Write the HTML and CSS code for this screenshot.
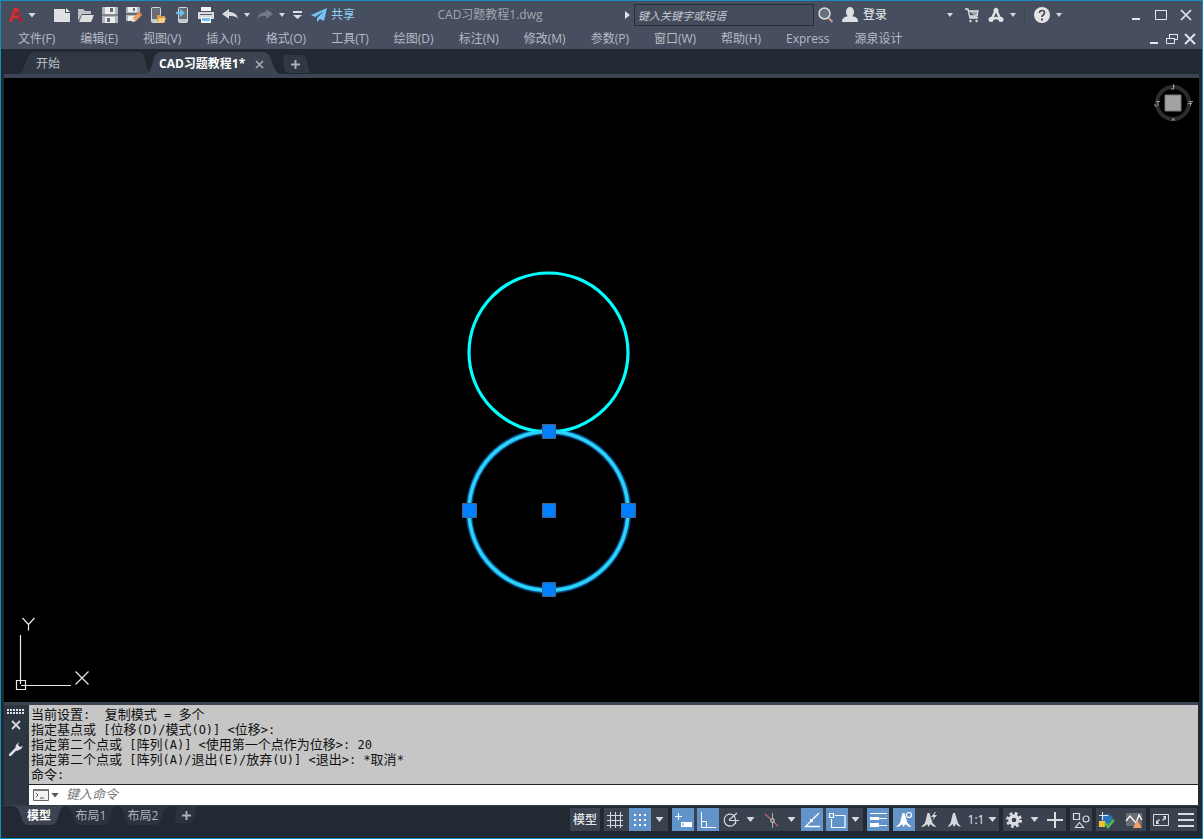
FILE: index.html
```html
<!DOCTYPE html>
<html lang="zh-CN">
<head>
<meta charset="utf-8">
<meta name="viewport" content="width=device-width, initial-scale=1">
<title>CAD习题教程1.dwg</title>
<link rel="stylesheet" href="styles.css">
</head>
<body>
<div class="window">
  <header class="titlebar">
    <div class="quick">
      <button class="app" aria-label="应用程序菜单"><svg width="16" height="20" viewBox="0 0 16 20"><path d="M1 17 6 3h4l5 14h-4l-1-4H6l-2 4z" fill="#a9272f"/><path d="M6 3h4l1 3-3 1-1 3h3l1 3H6l-2 4H1z" fill="#cf2f36"/><path d="m8 7 1.500 4h-3z" fill="#464e5f"/></svg><i class="caret big"></i></button>
      <button class="tool" aria-label="新建"><svg width="16" height="16" viewBox="0 0 16 16"><path d="M0 2h11v4h5v9H0z" fill="#dfe0e2"/><path d="m12 1 4 4h-4z" fill="#eee"/></svg></button>
      <button class="tool" aria-label="打开"><svg width="16" height="16" viewBox="0 0 16 16"><path d="M0 14V2h5l2 2h6v3H4z" fill="#bfc1c4"/><path d="M4 8h12l-3 7H1z" fill="#dedfdf"/></svg></button>
      <button class="tool" aria-label="保存"><svg width="16" height="16" viewBox="0 0 16 16"><path d="M0 0h16v16H0z" fill="#b3b6ba"/><path d="M3 0h10v7H3zM3 10h10v6H3z" fill="#ecedee"/><path d="M0 7h16v2H0z" fill="#83878d"/><path d="M8 1h3v4H8zM5 11h3v4H5z" fill="#656b75"/></svg></button>
      <button class="tool" aria-label="另存为"><svg width="16" height="16" viewBox="0 0 16 16"><path d="M0 0h14v8l-7 6H0z" fill="#b3b6ba"/><path d="M2 0h9v5H2zM2 9h6v5H2z" fill="#ecedee"/><path d="M0 6h14v2H0zM7 1h2v3H7z" fill="#656b75"/><path d="m6 15 1-4 6-6 3 3-6 6z" fill="#e7a15e"/><path d="m6 15 1-4 3 3z" fill="#f5e0c0"/><path d="m12 6 2-1 2 2-1 2z" fill="#d9744b"/></svg></button>
      <button class="tool" aria-label="从移动设备打开"><svg width="16" height="16" viewBox="0 0 16 16"><rect x="1.500" y=".5" width="9" height="15" rx="1" fill="#686d75" stroke="#d5d7d9"/><path d="M2 12h8v3H2z" fill="#c6c8cb"/><path d="M7 15V8h3l1 1h4v6z" fill="#d69a48"/><path d="M9 11h7l-2 5H7z" fill="#f4cf83"/></svg></button>
      <button class="tool" aria-label="保存到移动设备"><svg width="16" height="16" viewBox="0 0 16 16"><rect x="4.500" y=".5" width="9" height="15" rx="1" fill="#686d75" stroke="#d5d7d9"/><path d="M5 12h8v3H5z" fill="#c6c8cb"/><path d="M2 5h4V2l5 4-5 4V7H2z" fill="#63c1f2"/></svg></button>
      <button class="tool" aria-label="打印"><svg width="16" height="16" viewBox="0 0 16 16"><path d="M3 0h10v4H3z" fill="#f5f5f5"/><path d="M0 5h16v7H0z" fill="#d9dadb"/><path d="M2 7h12v1H2z" fill="#5b6370"/><path d="M3 10h10v6H3z" fill="#f8f8f8"/><path d="M4 11h8v3H4z" fill="#72bdec"/></svg></button>
      <button class="tool" aria-label="放弃"><svg width="16" height="14" viewBox="0 0 16 14"><path d="m0 6 7-5v3c5 0 8 2 9 7-2-3-5-3-9-3v3z" fill="#d9dade"/></svg></button>
      <i class="caret"></i>
      <button class="tool" aria-label="重做"><svg width="16" height="14" viewBox="0 0 16 14"><path d="M16 6 9 1v3c-5 0-8 2-9 7 2-3 5-3 9-3v3z" fill="#70798a"/></svg></button>
      <i class="caret"></i>
      <button class="custom" aria-label="自定义"><svg width="9" height="9" viewBox="0 0 9 9"><path d="M0 0h9v2H0zM0 4h9L4.500 8z" fill="#dddee2"/></svg></button>
      <button class="share"><svg width="16" height="16" viewBox="0 0 16 16"><path d="M16 1 0 8l4 2 9-6-7 7v4l3-3 4 2z" fill="#77c5f5"/></svg><span>共享</span></button>
    </div>
    <h1 class="doc">CAD习题教程1.dwg</h1>
    <div class="account">
      <button class="arrow" aria-label="展开搜索"><svg width="5" height="8" viewBox="0 0 5 8"><path d="m0 0 5 4-5 4z" fill="#dfe1e5"/></svg></button>
      <input class="search" type="text" placeholder="键入关键字或短语" aria-label="搜索">
      <button class="find" aria-label="查找"><svg width="16" height="16" viewBox="0 0 16 16"><circle cx="6.500" cy="6.500" r="5.500" fill="#69717e" stroke="#dcdde0" stroke-width="1.500"/><path d="m10.500 11 4 4" stroke="#c6a185" stroke-width="2"/></svg></button>
      <button class="login"><svg width="16" height="16" viewBox="0 0 16 16"><ellipse cx="8" cy="5" rx="4" ry="5" fill="#dedfe2"/><path d="M0 15c0-4 2-5 6-6h4c4 1 6 2 6 6z" fill="#dedfe2"/></svg><span>登录</span></button>
      <i class="caret far"></i>
      <button class="tool" aria-label="应用商店"><svg width="16" height="16" viewBox="0 0 16 16"><path d="M1 2h3l2 9h8M4 4h10l-1 5H5" fill="#9fa4ad" stroke="#dcdde0" stroke-width="1.300"/><circle cx="6.500" cy="14" r="1.200" fill="#ddd"/><circle cx="12.500" cy="14" r="1.200" fill="#ddd"/></svg></button>
      <button class="tool" aria-label="Autodesk App"><svg width="16" height="16" viewBox="0 0 16 16"><path d="m8 3-5 10q5-4 10 0z" fill="none" stroke="#e0e1e4" stroke-width="2.500"/><circle cx="8" cy="3.500" r="2.500" fill="#e0e1e4"/><circle cx="3" cy="12.500" r="2.500" fill="#e0e1e4"/><circle cx="13" cy="12.500" r="2.500" fill="#e0e1e4"/></svg></button>
      <i class="caret"></i>
      <span class="rule"></span>
      <button class="tool" aria-label="帮助"><svg width="16" height="16" viewBox="0 0 16 16"><circle cx="8" cy="8" r="8" fill="#e4e4e4"/><path d="M5.500 6c0-3.500 5-3 5-.3C10.500 8 8 7.500 8 10" fill="none" stroke="#3f4756" stroke-width="1.600"/><path d="M7 11.500h2v2H7z" fill="#3f4756"/></svg></button>
      <i class="caret"></i>
    </div>
    <div class="winbuttons">
      <button aria-label="最小化"><svg width="12" height="12" viewBox="0 0 12 12"><path d="M2 9h8v2H2z" fill="#e4e6ea"/></svg></button>
      <button aria-label="最大化"><svg width="12" height="12" viewBox="0 0 12 12"><path d="M.5 1.500h11v9H.5z" fill="none" stroke="#e4e6ea"/><path d="M0 1h12v1H0z" fill="#e4e6ea"/></svg></button>
      <button aria-label="关闭"><svg width="12" height="12" viewBox="0 0 12 12"><path d="m1 1 10 10M11 1 1 11" stroke="#e4e6ea" stroke-width="1.700"/></svg></button>
    </div>
  </header>

  <nav class="menubar">
    <button>文件(F)</button><button>编辑(E)</button><button>视图(V)</button><button>插入(I)</button><button>格式(O)</button><button>工具(T)</button><button>绘图(D)</button><button>标注(N)</button><button>修改(M)</button><button>参数(P)</button><button>窗口(W)</button><button>帮助(H)</button><button>Express</button><button>源泉设计</button>
    <div class="docbuttons">
      <button aria-label="最小化文档"><svg width="12" height="12" viewBox="0 0 12 12"><path d="M2 9h8v2H2z" fill="#e4e6ea"/></svg></button>
      <button aria-label="还原文档"><svg width="12" height="12" viewBox="0 0 12 12"><path d="M3.500 5V1.500h8v5H8" fill="none" stroke="#e4e6ea"/><path d="M3 1h9v1H3zM0 5h9v1H0z" fill="#e4e6ea"/><path d="M.5 5.500h8v5h-8z" fill="none" stroke="#e4e6ea"/></svg></button>
      <button aria-label="关闭文档"><svg width="12" height="12" viewBox="0 0 12 12"><path d="m1 1 10 10M11 1 1 11" stroke="#e4e6ea" stroke-width="1.900"/></svg></button>
    </div>
  </nav>

  <div class="filetabs">
    <button class="filetab"><svg class="shape" viewBox="0 0 130 22" preserveAspectRatio="none"><path d="M0 22C8 20 7 1 16 0H122C129 1 126 20 134 22z" fill="#303844"/></svg><span>开始</span></button>
    <div class="filetab active"><svg class="shape" viewBox="0 0 130 22" preserveAspectRatio="none"><path d="M-2 22C6 20 3 1 12 0H116C125 1 124 20 132 22z" fill="#3b4450"/></svg><span>CAD习题教程1*</span><button class="closetab" aria-label="关闭标签"><svg width="9" height="9" viewBox="0 0 9 9"><path d="m1 1 7 7M8 1 1 8" stroke="#a4a9b1" stroke-width="1.700"/></svg></button></div>
    <button class="addtab" aria-label="新图形"><svg class="shape" viewBox="0 0 30 18" preserveAspectRatio="none"><path d="M3 0h18q5 0 6 6l3 12H10Q5 18 4 12z" fill="#303844"/></svg><svg width="9" height="9" viewBox="0 0 9 9"><path d="M4.500 0v9M0 4.500h9" stroke="#aeb2b9" stroke-width="1.900"/></svg></button>
  </div>

  <main class="canvas">
    <svg class="circles" width="170" height="324" viewBox="463 270 170 324">
      <circle cx="548.500" cy="511" r="79.500" fill="none" stroke="#06305c" stroke-width="7"/>
      <circle cx="548.500" cy="511" r="79.500" fill="none" stroke="#0c64a6" stroke-width="5"/>
      <circle cx="548.500" cy="352.500" r="79.500" fill="none" stroke="#0ff" stroke-width="3.200"/>
      <circle cx="548.500" cy="511" r="79.500" fill="none" stroke="#2bd3f8" stroke-width="3.400"/>
      <g fill="#0080ff" stroke="#46648a"><path d="M542.500 424.500h13v14h-13zM462.500 503.500h14v14h-14zM542.500 503.500h13v14h-13zM621.500 503.500h14v14h-14zM542.500 582.500h13v14h-13z"/></g>
    </svg>
    <svg class="ucs" width="76" height="76" viewBox="14 615 76 76"><path d="M20.500 684V635M21 685.500h50M16.500 680.500h9v9h-9zM22.500 618l6 6.500 6-6.500M28.500 624v6.500M75.500 671.500l13 13M88.500 671.500l-13 13" fill="none" stroke="#e8e8e8" stroke-width="1.200"/></svg>
    <svg class="compass" width="40" height="40" viewBox="0 0 40 40"><circle cx="20" cy="20" r="16" fill="none" stroke="#2c2c2c" stroke-width="4"/><path d="M12 12h16v16H12z" fill="#a2a2a2" stroke="#777"/><path d="M20.500 1v5M20 3.500h2M18 6h3M3 19l2-1v5M2 21v2h2M5 18.500h2M36 18.500h4M37.500 18v5M35 20.500h4M18.500 38l2-3 1 3" fill="none" stroke="#999"/></svg>
  </main>

  <section class="command">
    <div class="grip">
      <svg width="18" height="6" viewBox="0 0 18 6"><path d="M0 1h18M0 4h18" stroke="#e2e4e6" stroke-width="2" stroke-dasharray="2 1"/></svg>
      <button aria-label="关闭命令行"><svg width="10" height="10" viewBox="0 0 10 10"><path d="m1 1 8 8M9 1 1 9" stroke="#d6d9dc" stroke-width="1.800"/></svg></button>
      <button class="wrench" aria-label="自定义命令行"><svg width="14" height="14" viewBox="0 0 14 14"><path d="m1 13 6-6" stroke="#dfe1e4" stroke-width="2.500" stroke-linecap="round"/><path d="m10 0-3 3-1 4 2 2 4-2 2-3-3 1-2-2z" fill="#dfe1e4"/></svg></button>
    </div>
    <div class="console">
      <div class="history">
        <p>当前设置<span>:&nbsp; </span>复制模式<span> = </span>多个</p>
        <p>指定基点或<span> [</span>位移<span>(D)/</span>模式<span>(O)] &lt;</span>位移<span>&gt;:</span></p>
        <p>指定第二个点或<span> [</span>阵列<span>(A)] &lt;</span>使用第一个点作为位移<span>&gt;: 20</span></p>
        <p>指定第二个点或<span> [</span>阵列<span>(A)/</span>退出<span>(E)/</span>放弃<span>(U)] &lt;</span>退出<span>&gt;: *</span>取消<span>*</span></p>
        <p>命令<span>:</span></p>
      </div>
      <div class="prompt">
        <button aria-label="最近使用的命令"><svg width="17" height="12" viewBox="0 0 17 12"><path d="M.5.5h15v11H.5z" fill="#f3f3f3" stroke="#666"/><path d="M0 0h16v2H0z" fill="#777"/><path d="m3 4 2 2-2 2M7 9h4" fill="none" stroke="#555"/></svg><i class="caret big dark"></i></button>
        <input type="text" placeholder="键入命令" aria-label="命令">
      </div>
    </div>
  </section>

  <footer class="status">
    <nav class="layouts">
      <button class="layout on"><svg class="shape" viewBox="0 0 50 19" preserveAspectRatio="none"><path d="M0 0h50q-4 2-6 11-2 8-7 8H14q-5 0-7-8Q5 2 0 0z" fill="#3b4450"/></svg><span>模型</span></button>
      <button class="layout"><svg class="shape" viewBox="0 0 50 19" preserveAspectRatio="none"><path d="M0 0h50q-4 2-6 11-2 8-7 8H14q-5 0-7-8Q5 2 0 0z" fill="#2b333e"/></svg><span>布局1</span></button>
      <button class="layout"><svg class="shape" viewBox="0 0 50 19" preserveAspectRatio="none"><path d="M0 0h50q-4 2-6 11-2 8-7 8H14q-5 0-7-8Q5 2 0 0z" fill="#2b333e"/></svg><span>布局2</span></button>
      <button class="layout add" aria-label="新建布局"><svg class="shape" viewBox="0 0 24 19" preserveAspectRatio="none"><path d="M4 0h20q-2 2-3 9-1 8-6 8H0q2-2 2-9 0-6 2-8z" fill="#2b333e"/></svg><svg width="9" height="9" viewBox="0 0 9 9"><path d="M4.500 0v9M0 4.500h9" stroke="#aeb2b9" stroke-width="1.900"/></svg></button>
    </nav>
    <div class="toggles">
      <div class="group"><button class="model">模型</button></div>
      <div class="group">
        <button aria-label="栅格"><svg width="22" height="22" viewBox="0 0 22 22"><path d="M6.500 3v16M11.500 3v16M16.500 3v16M3 6.500h16M3 11.500h16M3 16.500h16" stroke="#d5d9de"/></svg></button>
        <button class="on gap" aria-label="捕捉"><svg width="22" height="22" viewBox="0 0 22 22"><path d="M5 6h14M5 11h14M5 16h14" stroke="#fff" stroke-width="2" stroke-dasharray="2 3"/></svg></button>
        <button class="drop slim" aria-label="捕捉设置"><i class="caret big"></i></button>
      </div>
      <div class="group">
        <button class="on" aria-label="动态输入"><svg width="22" height="22" viewBox="0 0 22 22"><path d="M6.500 4v7M3 7.500h7" stroke="#fff"/><path d="M9 13h11v5H9z" fill="#fff"/><path d="M11 14v3" stroke="#6699cc"/></svg></button>
        <button class="on gap" aria-label="正交"><svg width="22" height="22" viewBox="0 0 22 22"><path d="M4.500 3v15.500H19M4.500 12.500h5v6" fill="none" stroke="#fff"/></svg></button>
        <button aria-label="极轴"><svg width="22" height="22" viewBox="0 0 22 22"><path d="M15 6.500a6 6 0 1 0 2 6M10 11.500h10M10 11l8-7M14 6q3 2 2.500 9" fill="none" stroke="#d5d9de" stroke-width="1.200"/></svg></button>
        <button class="drop" aria-label="极轴设置"><i class="caret big"></i></button>
        <button aria-label="等轴测草图"><svg width="22" height="22" viewBox="0 0 22 22"><path d="M12.500 4v15" stroke="#8ac195"/><path d="m5 5 13 12" stroke="#c4606d" stroke-width="1.300"/><path d="M11 10h3v3h-3z" fill="#222933" stroke="#ddd"/></svg></button>
        <button class="drop" aria-label="等轴测设置"><i class="caret big"></i></button>
        <button class="on" aria-label="对象捕捉追踪"><svg width="22" height="22" viewBox="0 0 22 22"><path d="M18 4 4.500 17.500H19" fill="none" stroke="#fff" stroke-width="1.300"/><path d="M9 10h3v3H9z" fill="#fff"/></svg></button>
        <button class="on gap" aria-label="对象捕捉"><svg width="22" height="22" viewBox="0 0 22 22"><path d="M9 6.500h10v12H5.500V10M3.500 4.500h4v4h-4z" fill="none" stroke="#fff" stroke-width="1.200"/></svg></button>
        <button class="drop narrow" aria-label="捕捉模式"><i class="caret big"></i></button>
      </div>
      <div class="group"><button class="on" aria-label="线宽"><svg width="22" height="22" viewBox="0 0 22 22"><path d="M3 4.500h17M12 9.500h8M12 16.500h8" stroke="#fff"/><path d="M3 8h9v3H3zM3 14h9v4H3z" fill="#fff"/></svg></button></div>
      <div class="group">
        <button class="on" aria-label="注释可见性"><svg width="22" height="22" viewBox="0 0 22 22"><path d="M9.500 4h2l3 10 4 4q-4 0-6-3l-2 3-1.500-3q-2 3-6 3l4-4z" fill="#fff"/><circle cx="16" cy="6" r="2.500" fill="#6294ca" stroke="#fff" stroke-width="1.200"/></svg></button>
        <button class="gap" aria-label="自动缩放"><svg width="22" height="22" viewBox="0 0 22 22"><path d="M9.500 4h2l3 10 4 4q-4 0-6-3l-2 3-1.500-3q-2 3-6 3l4-4zM17 3l-4 5h3l-2 4 5-6h-3l2-3z" fill="#d5d9de"/></svg></button>
        <button class="gap" aria-label="注释比例"><svg width="22" height="22" viewBox="0 0 22 22"><path d="M10 4h2l3 10 3 4q-3 0-5-3l-2 3-1.500-3q-2 3-5 3l3-4z" fill="#d5d9de"/></svg></button>
        <button class="scale">1:1<i class="caret big"></i></button>
      </div>
      <div class="group"><button aria-label="切换工作空间"><svg width="22" height="22" viewBox="0 0 22 22"><circle cx="11" cy="11" r="4" fill="none" stroke="#d9dce0" stroke-width="3.500"/><circle cx="11" cy="11" r="6.500" fill="none" stroke="#d9dce0" stroke-width="3" stroke-dasharray="2.700 2.405"/></svg></button><button class="drop" aria-label="工作空间列表"><i class="caret big"></i></button><button aria-label="注释监视器"><svg width="22" height="22" viewBox="0 0 22 22"><path d="M11 3v16M3 11h16" stroke="#d9dce0" stroke-width="2"/></svg></button></div>
      <div class="group"><button aria-label="隔离对象"><svg width="22" height="22" viewBox="0 0 22 22"><path d="M3.500 4.500h6v6h-6zM9.500 13.500l4 5h-8z" fill="none" stroke="#d9dce0" stroke-width="1.200"/><circle cx="16" cy="10" r="3" fill="none" stroke="#d9dce0" stroke-width="1.200"/></svg></button></div>
      <div class="group">
        <button aria-label="硬件加速"><svg width="22" height="22" viewBox="0 0 22 22"><circle cx="11" cy="11" r="6" fill="#2d74b8"/><path d="M3 12h6v6H3z" fill="#f1c232"/><path d="M6.500 3v8M3 6.500h9" stroke="#dcecff"/><path d="m9 14 3 4 6-7" fill="none" stroke="#54b848" stroke-width="2.500"/></svg></button>
        <button class="gap wide" aria-label="性能"><svg width="22" height="22" viewBox="0 0 22 22"><path d="M3 4h16v13H3z" fill="#6b6e73"/><path d="m3 12 4-5 6 7 3-8 3 5" fill="none" stroke="#fff" stroke-width="1.300"/><path d="m14 11 5 8h-9z" fill="#f3a164"/></svg></button>
      </div>
      <div class="group">
        <button aria-label="全屏显示"><svg width="22" height="22" viewBox="0 0 22 22"><path d="M3.500 5.500h15v11h-15z" fill="none" stroke="#d9dce0"/><path d="M16 7v4l-1-1-2 2-1-1 2-2-1-2zM6 15v-4l1 1 2-2 1 1-2 2 1 2z" fill="#d9dce0"/></svg></button>
        <button class="gap" aria-label="自定义状态栏"><svg width="22" height="22" viewBox="0 0 22 22"><path d="M3 5h16M3 11h16M3 17h16" stroke="#d9dce0" stroke-width="2"/></svg></button>
      </div>
    </div>
  </footer>
</div>
</body>
</html>
```
FILE: styles.css
```css
* { box-sizing: border-box; }
body {
  margin: 0;
  background: #222933;
  font: 12px/16px "Open Sans", "Noto Sans CJK SC", sans-serif;
  color: #d0d4da;
}
button {
  display: flex;
  align-items: center;
  justify-content: center;
  padding: 0;
  border: 0;
  background: none;
  color: inherit;
  font: inherit;
  white-space: nowrap;
}
svg { display: block; flex: none; }
input { min-width: 0; border: 0; border-radius: 0; outline: 0; }

.window {
  display: flex;
  flex-direction: column;
  height: 100vh;
  border: 1px solid #168fc0;
  background: #222933;
  overflow: hidden;
}

.caret {
  flex: none;
  width: 6px;
  height: 4px;
  margin: 0 -1px 0 -2px;
  background: #d5d8dd;
  clip-path: polygon(0 0, 100% 0, 50% 100%);
}
.caret.big { width: 8px; height: 5px; margin: 0; }
.caret.dark { background: #555; }

.titlebar {
  display: flex;
  align-items: center;
  height: 28px;
  flex: none;
  background: #464e5f;
}
.quick { display: flex; align-items: center; gap: 8px; padding-left: 7px; }
.app { gap: 4px; margin-right: 10px; }
.custom { margin: 0 1px; }
.share { gap: 4px; color: #8fd0f7; }
.doc {
  flex: 1;
  margin: 0;
  font-size: 12px;
  font-weight: 400;
  text-align: center;
  color: #a2a8b2;
  white-space: nowrap;
}
.account { display: flex; align-items: center; gap: 8px; }
.arrow { margin-right: -4px; }
.search {
  width: 180px;
  height: 22px;
  padding: 0 3px;
  border: 1px solid #262e3b;
  background: #444c5c;
  color: #d0d4da;
  font: italic 11px/16px "Open Sans", "Noto Sans CJK SC", sans-serif;
}
.search::placeholder { color: #c5c9d0; opacity: 1; }
.find { margin-left: -4px; }
.login { gap: 5px; color: #f0f1f3; }
.caret.far { margin: 0 3px 0 52px; }
.rule { width: 1px; height: 18px; margin: 0 1px; background: #3d4452; }
.winbuttons { display: flex; gap: 13px; margin: 0 10px 0 69px; }

.menubar {
  display: flex;
  align-items: center;
  gap: 25px;
  height: 20px;
  flex: none;
  padding: 0 6px 0 17px;
  background: #464e5f;
  color: #b6bbc3;
}
.docbuttons { display: flex; gap: 6px; margin-left: auto; }

.filetabs {
  display: flex;
  align-items: flex-end;
  height: 29px;
  flex: none;
  margin: 0 3px;
  padding-left: 14px;
  border-bottom: 4px solid #3b4450;
}
.filetab {
  position: relative;
  display: flex;
  align-items: center;
  width: 130px;
  height: 22px;
  padding: 2px 0 0 18px;
  justify-content: flex-start;
  color: #bcc1c8;
}
.filetab span, .filetab .closetab, .layout span { position: relative; }
.filetab.active { padding-left: 11px; gap: 10px; color: #fff; font-weight: 700; }
.shape { position: absolute; inset: 0; width: 100%; height: 100%; overflow: visible; }
.addtab { position: relative; width: 30px; height: 18px; margin: 0 0 1px 2px; }
.addtab svg:last-child, .layout svg:last-child { position: relative; }

.canvas {
  position: relative;
  flex: 1;
  min-height: 0;
  margin: 0 3px;
  background: #000;
  overflow: hidden;
}
.circles { position: absolute; left: 459px; top: 192px; overflow: visible; }
.ucs { position: absolute; left: 10px; bottom: 11px; }
.compass { position: absolute; right: 6px; top: 5px; }

.command {
  display: flex;
  flex: none;
  margin: 0 4px 0 3px;
  border-top: 3px solid #3b4450;
}
.grip {
  display: flex;
  flex-direction: column;
  align-items: center;
  width: 25px;
  padding: 4px 2px 0 0;
  background: #2d3541;
}
.grip button { margin-top: 5px; }
.grip .wrench { margin-top: 12px; }
.console { flex: 1; min-width: 0; background: #fff; }
.history {
  padding: 2px;
  border-bottom: 1px solid #222;
  background: #c6c6c6;
  color: #111;
  font: 13px/15px "DejaVu Sans Mono", "Noto Sans CJK SC", monospace;
}
.history p { margin: 0; height: 15px; white-space: pre; }
.history span { font-size: 12px; }
.prompt { display: flex; align-items: center; gap: 7px; height: 20px; padding-left: 4px; }
.prompt button { gap: 1px; }
.prompt input {
  flex: 1;
  height: 20px;
  padding: 0 0 2px;
  background: #fff;
  color: #111;
  font: italic 13px/18px "Open Sans", "Noto Sans CJK SC", sans-serif;
}
.prompt input::placeholder { color: #777; opacity: 1; }

.status {
  display: flex;
  justify-content: space-between;
  align-items: flex-start;
  height: 33px;
  flex: none;
  padding: 0 5px 0 13px;
  border-top: 1px solid #343d48;
}
.layouts { display: flex; gap: 2px; }
.layout { position: relative; width: 50px; height: 19px; color: #aeb3bb; }
.layout.on { color: #fff; font-weight: 700; }
.layout.add { width: 24px; margin-left: 4px; }

.toggles { display: flex; gap: 4px; padding-top: 2px; color: #e3e6ea; }
.group { display: flex; background: #3a424f; }
.group button { width: 22px; height: 23px; }
.group .on { background: #6294ca; }
.group .gap { margin-left: 3px; }
.group .model { width: 30px; font-weight: 500; }
.group .drop { width: 19px; }
.group .slim { width: 17px; }
.group .narrow { width: 15px; }
.group .scale { width: 34px; gap: 4px; }
.group .wide { width: 25px; }
```
